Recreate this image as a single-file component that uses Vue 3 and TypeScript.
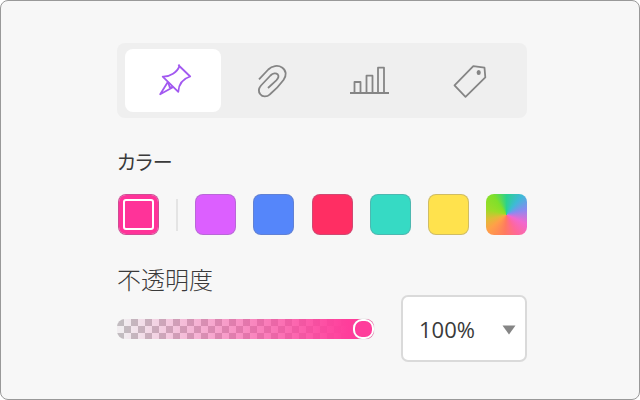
<script setup lang="ts">
import { ref } from 'vue'

type Tool = 'pin' | 'clip' | 'chart' | 'tag'

const tools: { id: Tool; label: string }[] = [
  { id: 'pin', label: 'ピン' },
  { id: 'clip', label: 'クリップ' },
  { id: 'chart', label: 'グラフ' },
  { id: 'tag', label: 'タグ' },
]
const presets = ['violet', 'blue', 'red', 'teal', 'yellow', 'rainbow']
const levels = [100, 75, 50, 25, 0]

const activeTool = ref<Tool>('pin')
const activeColor = ref('pink')
const opacity = ref(100)
</script>

<template>
  <main class="panel">
    <div class="tabs" role="tablist">
      <button
        v-for="tool in tools"
        :key="tool.id"
        type="button"
        role="tab"
        class="tab"
        :class="{ active: tool.id === activeTool }"
        :aria-selected="tool.id === activeTool"
        :aria-label="tool.label"
        @click="activeTool = tool.id"
      >
        <svg class="icon" viewBox="-2 0 44 41" aria-hidden="true">
          <g v-if="tool.id === 'pin'">
            <path d="M25.500 4.500L26.300 6L37.200 16.500C30.500 18.500 25.800 24 25.300 31.800L9.700 16.700C16.500 17 24.800 12 26.300 6" />
            <path d="M15 21.800L7.200 34.300L20.300 27M15 22L16.800 27.500L20 27" />
          </g>
          <path
            v-else-if="tool.id === 'clip'"
            d="M7 19.300L16.300 9.500C20 5.800 26 4.800 30 7.500C34.500 10.500 34.800 15.500 31.500 20C27.500 25.500 22.500 30.500 18 34.300C15 37 10.500 37.300 8.300 34.300C6 31.300 6.500 28.500 9 25.500L18.500 15.500C21 13 24 12.700 25.800 14.500C27.300 16.300 26 18.500 24.300 20.300L16 28"
          />
          <g v-else-if="tool.id === 'chart'">
            <path d="M-2 33H37M2.500 33V22H8.500V33M14.500 33V15.700H20.500V33M26 33V7.700H32V33" />
          </g>
          <g v-else>
            <path d="M22.300 6.200L33.500 7.700L34.300 17.300L14.500 36.800L3.500 25.300Z" />
            <ellipse class="hole" cx="27.700" cy="12.500" rx="1.200" ry="1.700" />
          </g>
        </svg>
      </button>
    </div>

    <h2 class="label color-label">カラー</h2>
    <div class="swatches">
      <button
        type="button"
        class="swatch pink"
        :class="{ selected: activeColor === 'pink' }"
        :aria-pressed="activeColor === 'pink'"
        aria-label="pink"
        @click="activeColor = 'pink'"
      ></button>
      <span class="divider"></span>
      <button
        v-for="name in presets"
        :key="name"
        type="button"
        class="swatch"
        :class="[name, { selected: activeColor === name }]"
        :aria-pressed="activeColor === name"
        :aria-label="name"
        @click="activeColor = name"
      ></button>
    </div>

    <label class="label opacity-label" for="opacity">不透明度</label>
    <div class="opacity-row">
      <input id="opacity" v-model.number="opacity" class="slider" type="range" min="0" max="100" />
      <div class="select-box">
        <select v-model.number="opacity" class="select" aria-label="不透明度">
          <option v-for="level in levels" :key="level" :value="level">{{ level }}%</option>
        </select>
        <svg class="arrow" viewBox="0 0 14 10" aria-hidden="true">
          <path d="M0.500 0.500H13.500L7 9.500Z" />
        </svg>
      </div>
    </div>
  </main>
</template>

<style>
body {
  background: #fff;
}
</style>

<style scoped>
.panel {
  box-sizing: border-box;
  min-height: 100vh;
  padding: 42px 112px 36px 116px;
  border: 1px solid #999;
  border-radius: 8px;
  background: #f7f7f7;
  color: #3a3a3a;
  font-family: 'Open Sans', 'Noto Sans CJK JP', sans-serif;
}

.tabs {
  display: flex;
  gap: 4px;
  padding: 6px 8px;
  border-radius: 8px;
  background: #efefef;
}

.tab {
  display: flex;
  flex: 1;
  align-items: center;
  justify-content: center;
  height: 63px;
  padding: 0;
  border: 0;
  border-radius: 8px;
  background: transparent;
  color: #858585;
}

.tab.active {
  background: #fff;
  color: #a259f0;
}

.icon {
  width: 44px;
  height: 41px;
  fill: none;
  stroke: currentColor;
  stroke-width: 1.8;
  stroke-linejoin: round;
}

.hole {
  fill: currentColor;
}

.label {
  display: block;
  margin: 0;
  line-height: 32px;
}

.color-label {
  margin-top: 29px;
  font-size: 20px;
  font-weight: 400;
  font-feature-settings: 'palt';
}

.swatches {
  display: flex;
  align-items: center;
  justify-content: space-between;
  margin-top: 15px;
  padding-left: 1px;
}

.swatch {
  width: 41px;
  height: 41px;
  padding: 0;
  border: 1px solid rgba(120, 120, 140, 0.35);
  border-radius: 8px;
}

.swatch.selected {
  box-shadow: inset 0 0 0 4px #ff3399, inset 0 0 0 6px #fff;
}

.pink {
  background-color: #ff3399;
}

.violet {
  background-color: #dc5fff;
}

.blue {
  background-color: #5586fa;
}

.red {
  background-color: #ff2e63;
}

.teal {
  background-color: #36dac4;
}

.yellow {
  background-color: #ffe24d;
}

.rainbow {
  border: 0;
  background: conic-gradient(
    #2bd18e,
    #3fb9d8 40deg,
    #8a8af0 75deg,
    #f168cf 115deg,
    #ff679a 150deg,
    #ff7a60 185deg,
    #ffa048 230deg,
    #e0bb38 255deg,
    #9cdc28 285deg,
    #7fe02a 325deg,
    #2bd18e
  );
}

.divider {
  width: 2px;
  height: 32px;
  background: #e4e4e4;
}

.opacity-label {
  margin-top: 29px;
  margin-bottom: -1px;
  font-size: 24px;
  font-weight: 300;
}

.opacity-row {
  display: flex;
  align-items: center;
  gap: 27px;
}

.slider {
  flex: 1;
  min-width: 0;
  height: 20px;
  margin: 0;
  border-radius: 8px;
  appearance: none;
  background:
    linear-gradient(to right, rgba(255, 61, 155, 0) 2%, #ff3d9b 90%),
    repeating-conic-gradient(#f1edf0 0 25%, #c2bcc0 0 50%) 0 0 / 14px 14px;
}

.slider::-webkit-slider-thumb {
  box-sizing: border-box;
  width: 21px;
  height: 20px;
  border: 2px solid #fff;
  border-radius: 9px;
  appearance: none;
  background: #ff3d9b;
  box-shadow: 0 0 1px 0 #aaa;
}

.select-box {
  position: relative;
  width: 126px;
}

.select {
  box-sizing: border-box;
  display: block;
  width: 100%;
  height: 67px;
  padding: 0 32px 0 16px;
  border: 2px solid #dadada;
  border-radius: 7px;
  appearance: none;
  background: #fff;
  color: #3a3a3a;
  font-family: 'Open Sans', sans-serif;
  font-size: 22px;
}

.arrow {
  position: absolute;
  top: 30px;
  right: 11px;
  width: 14px;
  height: 10px;
  fill: #858585;
  pointer-events: none;
}
</style>
